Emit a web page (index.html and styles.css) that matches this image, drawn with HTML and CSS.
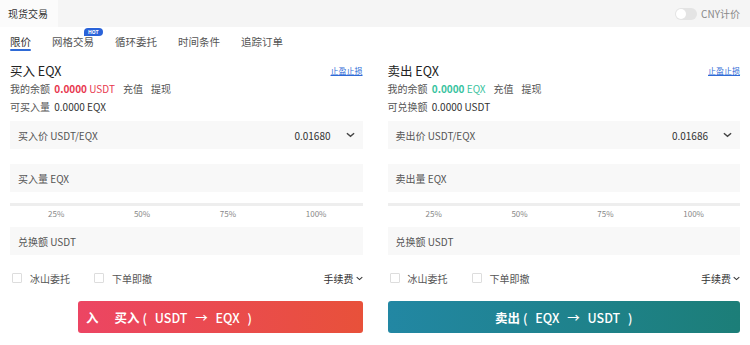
FILE: index.html
```html
<!DOCTYPE html>
<html>
<head>
<meta charset="utf-8">
<link rel="stylesheet" href="styles.css">
</head>
<body>
<div class="header">
  <div class="htab">现货交易</div>
  <div class="cny"><span class="switch"><span class="knob"></span></span><span>CNY计价</span></div>
</div>
<div class="tabs">
  <div class="tab active">限价</div>
  <div class="tab">网格交易<span class="hot">HOT</span></div>
  <div class="tab">循环委托</div>
  <div class="tab">时间条件</div>
  <div class="tab">追踪订单</div>
</div>
<div class="panels">
  <div class="panel">
    <div class="title-row"><span class="title">买入 EQX</span><a class="link">止盈止损</a></div>
    <div class="info">我的余额 <span class="red"><b>0.0000</b> USDT</span><span class="act">充值</span><span class="act">提现</span></div>
    <div class="info">可买入量 <span class="dark">0.0000 EQX</span></div>
    <div class="input first"><span>买入价 USDT/EQX</span><span class="val">0.01680<svg class="chev" viewBox="0 0 10 6" width="9" height="6"><path d="M1 1l4 3.5L9 1" fill="none" stroke="#444" stroke-width="1.6"/></svg></span></div>
    <div class="input"><span>买入量 EQX</span></div>
    <div class="slider"><div class="track"></div><div class="marks"><span>25%</span><span>50%</span><span>75%</span><span>100%</span></div></div>
    <div class="input"><span>兑换额 USDT</span></div>
    <div class="opts"><span class="cb"></span><span class="ol">冰山委托</span><span class="cb cb2"></span><span class="ol">下单即撤</span><span class="fee">手续费<svg viewBox="0 0 10 6" width="7" height="5"><path d="M1 1l4 3.5L9 1" fill="none" stroke="#333" stroke-width="1.5"/></svg></span></div>
    <div class="btnrow"><span class="ghost"></span><div class="btn buy"><span class="frag">入</span><b>买入</b><span class="pair">( USDT → EQX )</span></div></div>
  </div>
  <div class="panel">
    <div class="title-row"><span class="title">卖出 EQX</span><a class="link">止盈止损</a></div>
    <div class="info">我的余额 <span class="green"><b>0.0000</b> EQX</span><span class="act">充值</span><span class="act">提现</span></div>
    <div class="info">可兑换额 <span class="dark">0.0000 USDT</span></div>
    <div class="input first"><span>卖出价 USDT/EQX</span><span class="val">0.01686<svg class="chev" viewBox="0 0 10 6" width="9" height="6"><path d="M1 1l4 3.5L9 1" fill="none" stroke="#444" stroke-width="1.6"/></svg></span></div>
    <div class="input"><span>卖出量 EQX</span></div>
    <div class="slider"><div class="track"></div><div class="marks"><span>25%</span><span>50%</span><span>75%</span><span>100%</span></div></div>
    <div class="input"><span>兑换额 USDT</span></div>
    <div class="opts"><span class="cb"></span><span class="ol">冰山委托</span><span class="cb cb2"></span><span class="ol">下单即撤</span><span class="fee">手续费<svg viewBox="0 0 10 6" width="7" height="5"><path d="M1 1l4 3.5L9 1" fill="none" stroke="#333" stroke-width="1.5"/></svg></span></div>
    <div class="btnrow"><div class="btn sell"><b>卖出</b><span class="pair">( EQX → USDT )</span></div></div>
  </div>
</div>
</body>
</html>
```
FILE: styles.css
```css
* { box-sizing: border-box; }
body {
  margin: 0;
  width: 750px;
  height: 345px;
  overflow: hidden;
  background: #fff;
  font-family: "Noto Sans CJK SC", "Noto Sans", sans-serif;
  font-size: 11px;
  color: #333;
}
.header {
  height: 27px;
  background: #f5f5f5;
  display: flex;
  align-items: center;
  justify-content: space-between;
  padding-right: 10px;
}
.htab {
  height: 27px;
  background: #fbfbfb;
  padding: 0 10px 0 8px;
  display: flex;
  align-items: center;
  font-size: 10px;
  color: #333;
}
.cny {
  display: flex;
  align-items: center;
  gap: 4px;
  color: #888;
  font-size: 10px;
}
.switch {
  width: 22px;
  height: 12px;
  border-radius: 6px;
  background: #e4e4e4;
  display: flex;
  align-items: center;
  padding-left: 1px;
}
.knob {
  width: 10px;
  height: 10px;
  border-radius: 50%;
  background: #fff;
}
.tabs {
  display: flex;
  padding: 7px 10px 0;
  height: 33px;
  align-items: flex-start;
}
.tab {
  position: relative;
  font-size: 10.5px;
  color: #555;
  margin-right: 21px;
  height: 17px;
}
.tab.active { color: #333; }
.tab.active::after {
  content: "";
  position: absolute;
  left: 0;
  bottom: 0;
  width: 21px;
  height: 2px;
  background: #2e6ad6;
  border-radius: 1px;
}
.hot {
  position: absolute;
  left: 32px;
  top: -6px;
  background: #2a63d9;
  color: #fff;
  font-size: 5px;
  font-weight: bold;
  line-height: 8px;
  padding: 0 4px;
  border-radius: 5px 5px 5px 0;
}
.panels {
  display: flex;
  gap: 25px;
  padding: 0 10px;
}
.panel {
  flex: 1;
  display: flex;
  flex-direction: column;
}
.title-row {
  display: flex;
  justify-content: space-between;
  align-items: center;
  height: 20px;
}
.title {
  font-size: 12.5px;
  color: #222;
}
.link {
  font-size: 8px;
  color: #2e6ad6;
  text-decoration: underline;
}
.info {
  height: 18px;
  line-height: 18px;
  font-size: 10px;
  color: #555;
}
.red { color: #e8384f; margin-left: 2px; }
.green { color: #39c3a0; margin-left: 2px; }
.dark { color: #333; margin-left: 2px; }
.act { margin-left: 8px; color: #555; }
.input {
  height: 28px;
  background: #f8f8f8;
  display: flex;
  align-items: center;
  justify-content: space-between;
  padding: 0 8px;
  font-size: 10px;
  color: #555;
  margin-top: 15px;
}
.input.first { margin-top: 5px; }
.val {
  display: flex;
  align-items: center;
  color: #333;
  font-size: 10px;
}
.chev { margin-left: 15px; }
.slider {
  margin-top: 11px;
  height: 25px;
}
.track {
  height: 3px;
  background: #eeeeee;
}
.marks {
  display: flex;
  justify-content: space-between;
  padding: 0 36px 0 38px;
  font-size: 8px;
  color: #888;
  margin-top: 2px;
}
.slider + .input { margin-top: -1px; }
.opts {
  display: flex;
  align-items: center;
  height: 20px;
  margin-top: 13px;
  font-size: 10px;
  color: #555;
}
.cb {
  width: 10px;
  height: 10px;
  border: 1px solid #ddd;
  border-radius: 1px;
  margin-left: 2px;
}
.cb2 { margin-left: 24px; }
.ol { margin-left: 8px; }
.fee {
  margin-left: auto;
  display: flex;
  align-items: center;
  gap: 2px;
  color: #333;
}
.btnrow {
  display: flex;
  margin-top: 13px;
  align-items: center;
}
.ghost {
  width: 68px;
  height: 32px;
}
.btn {
  flex: 1;
  height: 32px;
  border-radius: 3px;
  color: #fff;
  display: flex;
  align-items: center;
  justify-content: center;
  font-size: 12.5px;
}
.btn b { font-weight: bold; }
.pair {
  margin-left: 3px;
  word-spacing: 5px;
  font-weight: 500;
}
.btn.buy {
  background: linear-gradient(90deg, #ec4563, #e8513a);
  justify-content: flex-start;
  padding-left: 42px;
}
.btn.buy .frag {
  margin-left: -34px;
  margin-right: 16px;
  font-weight: bold;
}
.btn.sell {
  background: linear-gradient(90deg, #2287a3, #1c7e78);
}
```
